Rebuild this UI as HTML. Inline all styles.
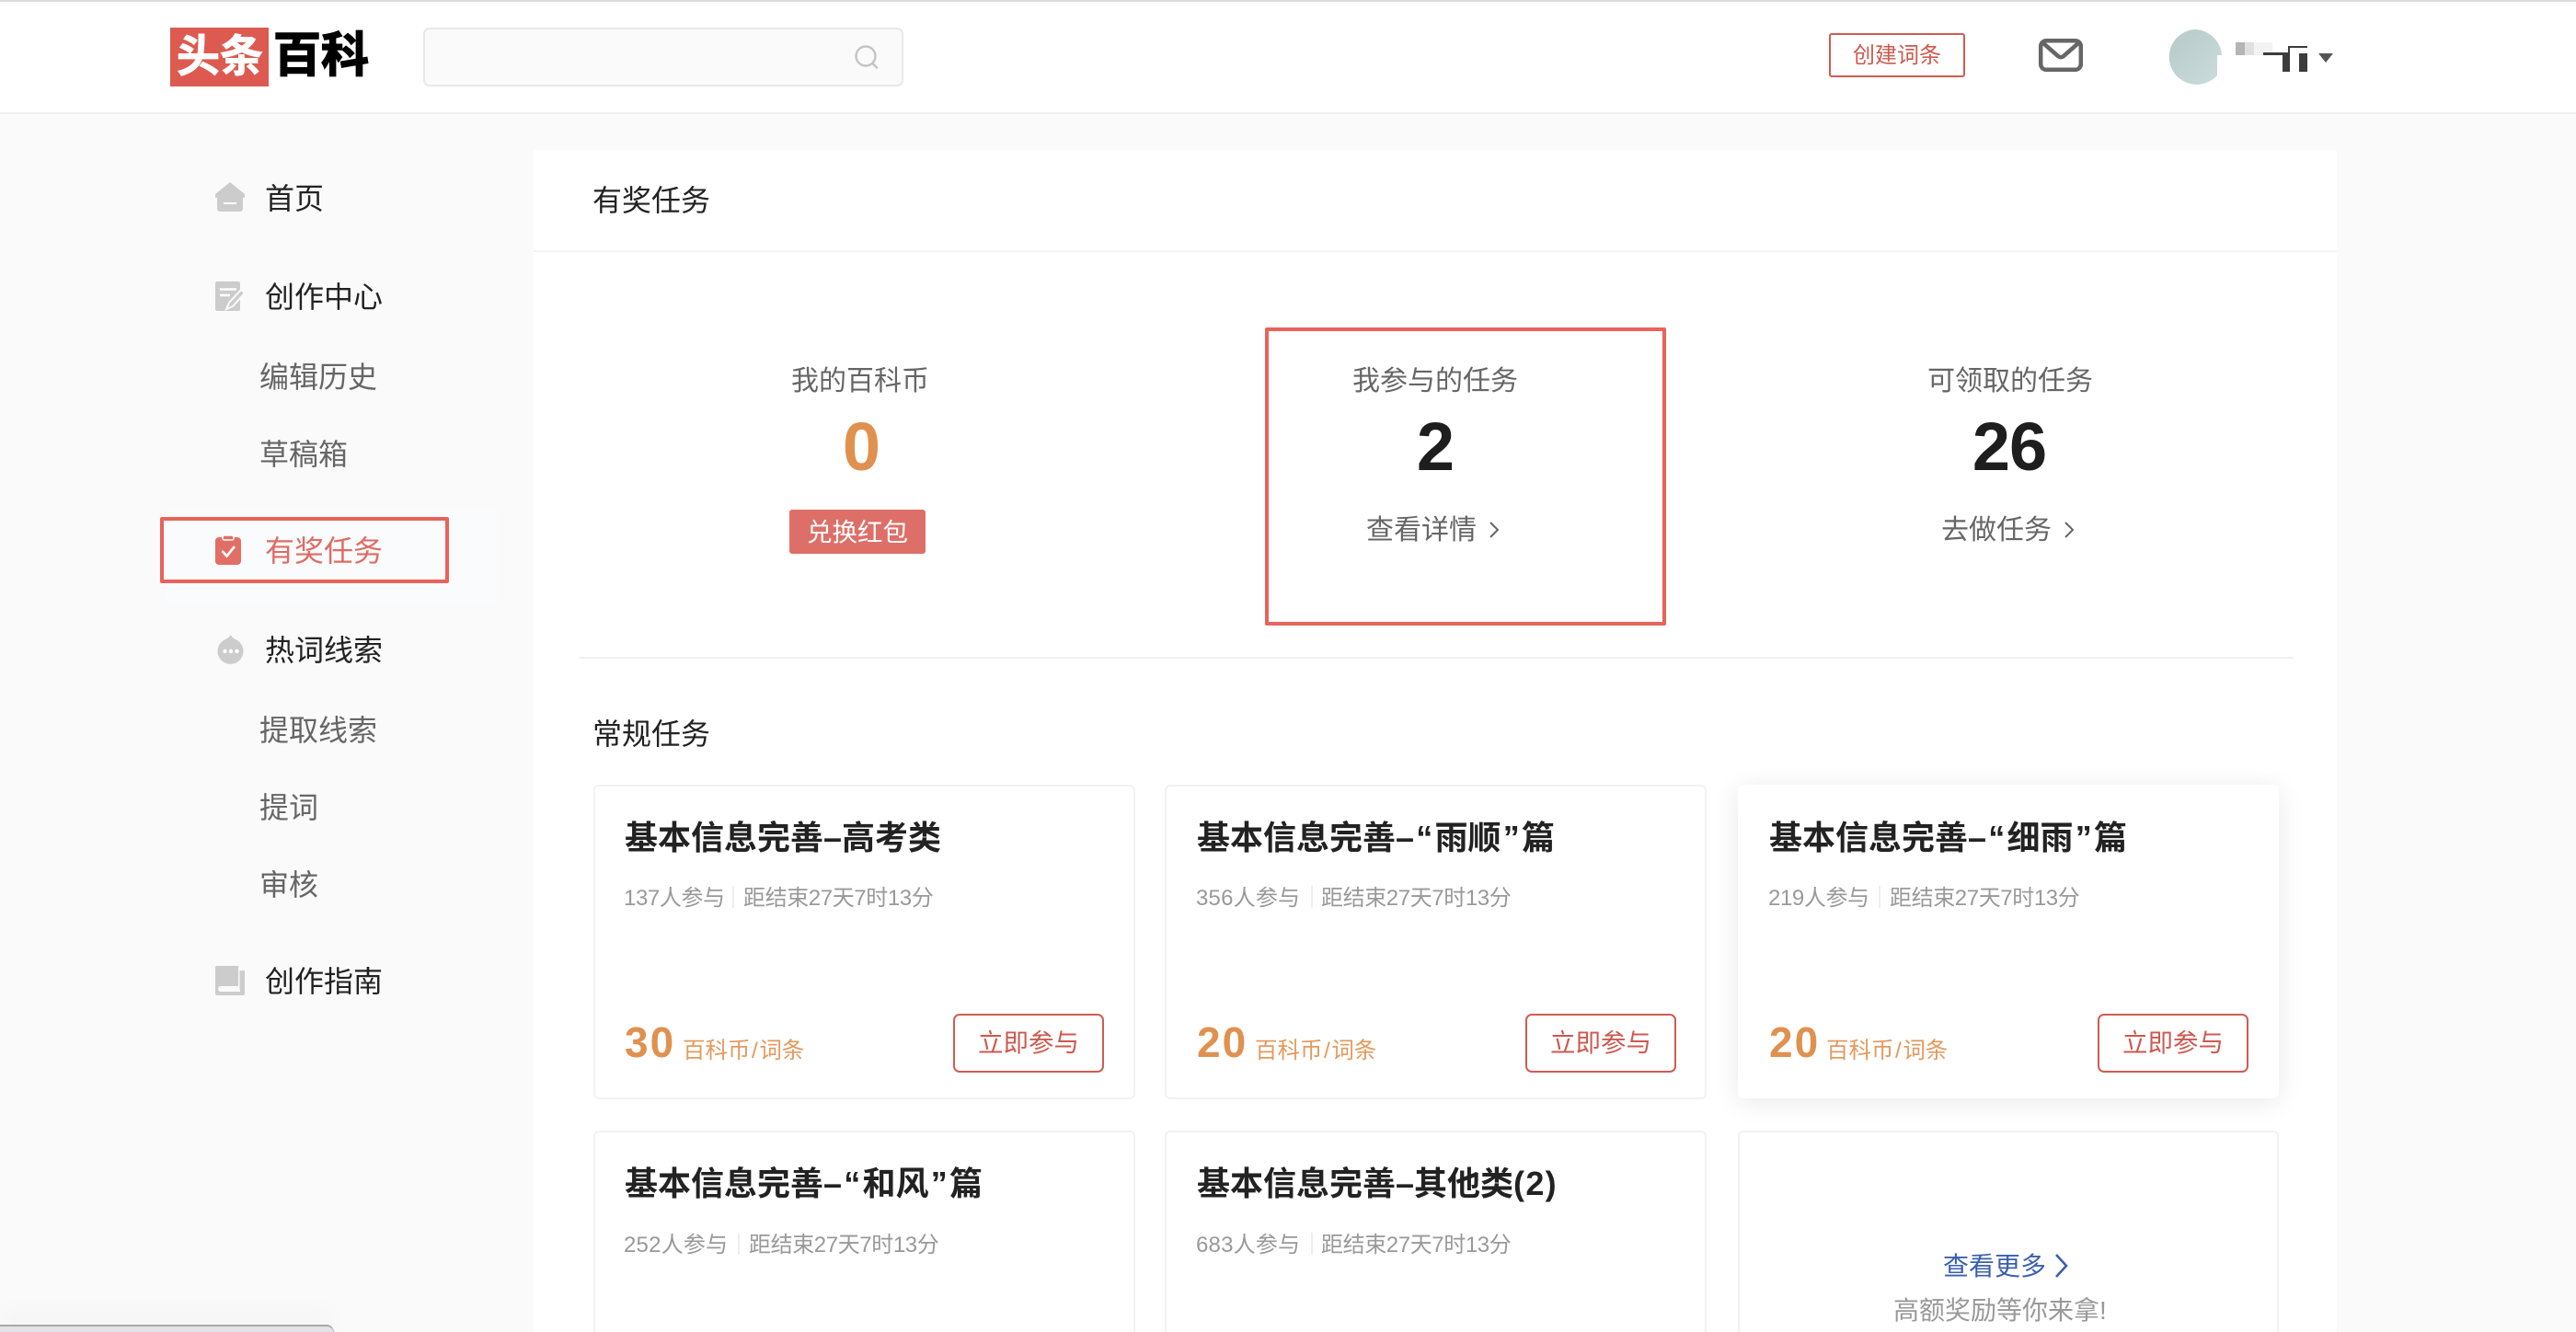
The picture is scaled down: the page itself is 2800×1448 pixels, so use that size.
<!DOCTYPE html>
<html lang="zh-CN"><head><meta charset="utf-8"><title>有奖任务</title>
<style>
html,body{margin:0;padding:0;width:2800px;height:1448px;overflow:hidden}
body{background:#fafafa;font-family:"Liberation Sans","Noto Sans CJK SC",sans-serif;color:#222}
#p{position:relative;width:2800px;height:1448px;overflow:hidden;background:#fafafa}
.a{position:absolute;box-sizing:border-box}
.t{position:absolute;white-space:nowrap;line-height:40px;margin-top:-18px}
.c{transform:translateX(-50%)}
.n{font-size:32px;color:#222;left:288px;margin-top:-19.5px}
.s{font-size:32px;color:#666;left:282px}
.st{font-size:30px;color:#666}
.num{font-size:74px;font-weight:bold;line-height:80px;margin-top:-40px;letter-spacing:-1px}
.card{position:absolute;box-sizing:border-box;background:#fff;border:2px solid #f2f2f2;border-radius:6px;width:589px}
.open{height:219px;border-bottom:0;border-radius:6px 6px 0 0}
.ti{font-size:36px;font-weight:bold;color:#222}
.q{margin:0 2.25px}
.m{font-size:24px;color:#999;letter-spacing:-.4px}
.m0{letter-spacing:.2px}
.sep{position:absolute;width:2px;height:24px;background:#eee}
.r{font-size:46px;font-weight:bold;color:#e0914f;letter-spacing:2px;margin-top:-20px}
.u{font-size:24.5px;color:#e39a5e}
.sl{margin:0 1.5px}
.b{position:absolute;box-sizing:border-box;width:164px;height:64px;border:2px solid #cf5c52;border-radius:7px;color:#cc5a50;font-size:27.5px;line-height:60px;text-align:center;background:#fff}
svg{position:absolute;overflow:visible}
</style></head><body><div id="p">

<!-- header -->
<div class="a" style="left:0;top:0;width:2800px;height:124px;background:#fff;border-top:2px solid #ddd;border-bottom:2px solid #eee"></div>
<div class="a" style="left:185px;top:30px;width:107px;height:64px;background:#dd5a50"></div>
<div class="t" style="left:192px;top:59px;font-size:47px;font-weight:bold;color:#fff;-webkit-text-stroke:1px #fff;transform:scaleY(1.02)">头条</div>
<div class="t" style="left:297px;top:61px;font-size:52px;font-weight:bold;color:#000;-webkit-text-stroke:1.5px #000;line-height:60px;margin-top:-30px">百科</div>
<div class="a" style="left:460px;top:30px;width:522px;height:64px;background:#fafafa;border:2px solid #e8e8e8;border-radius:7px"></div>
<svg style="left:928px;top:48px" width="28" height="28" viewBox="0 0 28 28" fill="none" stroke="#c4c4c4" stroke-width="2.4"><circle cx="13" cy="13" r="10.5"/><path d="M20.5 21l4.5 4.5" stroke-linecap="round"/></svg>

<div class="a" style="left:1988px;top:36px;width:148px;height:48px;border:2px solid #cf5c52;border-radius:3px"></div>
<div class="t c" style="left:2062px;top:59px;font-size:24px;color:#cc5a50">创建词条</div>
<svg style="left:2216px;top:42px" width="48" height="36" viewBox="0 0 48 36" fill="none" stroke="#666" stroke-width="4.5"><rect x="2.2" y="2.2" width="43.600" height="31.600" rx="6"/><path d="M5 5l16 14q3 2.400 6 0L43 5" stroke-linejoin="round"/></svg>

<svg style="left:2355px;top:32px" width="60" height="60" viewBox="0 0 60 60"><defs><linearGradient id="g" x1="0" y1="0" x2="1" y2="1"><stop offset="0" stop-color="#b6cac8"/><stop offset="1" stop-color="#cbdcdc"/></linearGradient></defs><path d="M30 0a30 30 0 0 1 30 28H55V50A30 30 0 1 1 30 0z" fill="url(#g)"/></svg>
<div class="a" style="left:2430px;top:46px;width:10px;height:14px;background:#b5b5b5"></div>
<div class="a" style="left:2440px;top:46px;width:10px;height:14px;background:#e0e0e0"></div>
<div class="a" style="left:2450px;top:46px;width:20px;height:14px;background:#f3f3f3"></div>
<div class="a" style="left:2460px;top:57px;width:29px;height:3px;background:#3c3c3c"></div>
<div class="a" style="left:2481px;top:58px;width:8px;height:20px;background:#3c3c3c"></div>
<div class="a" style="left:2499px;top:58px;width:9px;height:20px;background:#3c3c3c"></div>
<div class="a" style="left:2487px;top:50px;width:21px;height:2px;background:#3c3c3c"></div>
<div class="a" style="left:2487px;top:50px;width:2px;height:9px;background:#3c3c3c"></div>
<svg style="left:2520px;top:58px" width="16" height="10" viewBox="0 0 16 10"><path d="M0 0h16L8 10z" fill="#555"/></svg>

<!-- sidebar -->
<svg style="left:234px;top:198px" width="32" height="32" viewBox="0 0 32 32"><path d="M16 0L32 13v4h-2v12a3 3 0 0 1-3 3H5a3 3 0 0 1-3-3V17H0v-4z" fill="#ccc"/><rect x="9" y="22" width="14" height="2" fill="#fff"/></svg>
<div class="t n" style="top:215px">首页</div>

<svg style="left:234px;top:306px" width="32" height="32" viewBox="0 0 32 32"><rect width="27" height="32" rx="2" fill="#ccc"/><path d="M5 8.500h18M5 15h11" stroke="#fff" stroke-width="2.400"/><path d="M12 30l3-7L28 9l4 3.500L19 27z" fill="#ccc" stroke="#fafafa" stroke-width="2"/></svg>
<div class="t n" style="top:322px">创作中心</div>
<div class="t s" style="top:408px">编辑历史</div>
<div class="t s" style="top:492px">草稿箱</div>

<div class="a" style="left:180px;top:553px;width:360px;height:104px;background:#fafbfc"></div>
<div class="a" style="left:174px;top:562px;width:314px;height:72px;border:4px solid #e8635a;border-radius:2px"></div>
<svg style="left:234px;top:582px" width="28" height="32" viewBox="0 0 28 32"><rect y="2" width="28" height="30" rx="4" fill="#e26f66"/><rect x="8" y="0" width="12" height="5" rx="2" fill="#e26f66" stroke="#fafbfc" stroke-width="1.500"/><path d="M7.500 17l5 5.500L21 12" fill="none" stroke="#fff" stroke-width="2.600"/></svg>
<div class="t n" style="top:598px;color:#de6b63">有奖任务</div>

<svg style="left:237px;top:690px" width="28" height="32" viewBox="0 0 28 32"><path d="M14 0c1 3 3 4 5 5a14 14 0 1 1-11 0c2-1 4-2 6-5z" fill="#ccc"/><circle cx="7.500" cy="18" r="2.200" fill="#fff"/><circle cx="14" cy="18" r="2.200" fill="#fff"/><circle cx="20.500" cy="18" r="2.200" fill="#fff"/></svg>
<div class="t n" style="top:706px">热词线索</div>
<div class="t s" style="top:792px">提取线索</div>
<div class="t s" style="top:876px">提词</div>
<div class="t s" style="top:960px">审核</div>

<svg style="left:234px;top:1050px" width="32" height="32" viewBox="0 0 32 32"><path d="M2 0h23v22H6a3 3 0 0 0 0 6h21V6h2v-1h3v25a2 2 0 0 1-2 2H2a2 2 0 0 1-2-2V2a2 2 0 0 1 2-2z" fill="#ccc"/><path d="M27.500 5v21" stroke="#ccc" stroke-width="2"/></svg>
<div class="t n" style="top:1066px">创作指南</div>

<!-- main card -->
<div class="a" style="left:580px;top:163px;width:1960px;height:1285px;background:#fff"></div>
<div class="a" style="left:580px;top:272px;width:1960px;height:2px;background:#f3f3f3"></div>
<div class="t" style="left:644px;top:216px;font-size:32px">有奖任务</div>

<div class="t st c" style="left:935px;top:413px">我的百科币</div>
<div class="t num c" style="left:936px;top:486px;color:#e0914f">0</div>
<div class="a" style="left:858px;top:554px;width:148px;height:48px;background:#de6f68;border-radius:3px"></div>
<div class="t c" style="left:932px;top:577px;font-size:27.500px;color:#fff">兑换红包</div>

<div class="a" style="left:1375px;top:356px;width:436px;height:324px;border:4px solid #e8635a;border-radius:2px"></div>
<div class="t st c" style="left:1560px;top:413px">我参与的任务</div>
<div class="t num c" style="left:1560px;top:486px;color:#1e1e1e">2</div>
<div class="t st" style="left:1485px;top:575px">查看详情</div>
<svg style="left:1618px;top:566px" width="12" height="20" viewBox="0 0 12 20" fill="none" stroke="#666" stroke-width="2"><path d="M2 2l8 8-8 8"/></svg>

<div class="t st c" style="left:2185px;top:413px">可领取的任务</div>
<div class="t num c" style="left:2184px;top:486px;color:#1e1e1e">26</div>
<div class="t st" style="left:2110px;top:575px">去做任务</div>
<svg style="left:2243px;top:566px" width="12" height="20" viewBox="0 0 12 20" fill="none" stroke="#666" stroke-width="2"><path d="M2 2l8 8-8 8"/></svg>

<div class="a" style="left:629px;top:714px;width:1864px;height:2px;background:#f0f0f0"></div>
<div class="t" style="left:644px;top:796px;font-size:32px">常规任务</div>

<!-- cards row 1 -->
<div class="card" style="left:645px;top:853px;height:342px"></div>
<div class="t ti" style="left:679px;top:909px">基本信息完善–高考类</div>
<div class="t m" style="left:678px;top:975px">137人参与</div><div class="sep" style="left:796px;top:963px"></div><div class="t m" style="left:808px;top:975px">距结束27天7时13分</div>
<div class="t r" style="left:679px;top:1133px">30</div><div class="t u" style="left:742px;top:1141px">百科币<span class="sl">/</span>词条</div>
<div class="b" style="left:1036px;top:1102px">立即参与</div>

<div class="card" style="left:1266px;top:853px;height:342px"></div>
<div class="t ti" style="left:1301px;top:909px">基本信息完善–<span class="q">“</span>雨顺<span class="q">”</span>篇</div>
<div class="t m m0" style="left:1300px;top:975px">356人参与</div><div class="sep" style="left:1425px;top:963px"></div><div class="t m" style="left:1436px;top:975px">距结束27天7时13分</div>
<div class="t r" style="left:1301px;top:1133px">20</div><div class="t u" style="left:1364px;top:1141px">百科币<span class="sl">/</span>词条</div>
<div class="b" style="left:1658px;top:1102px">立即参与</div>

<div class="card" style="left:1889px;top:853px;height:341px;width:588px;border-color:#fff;box-shadow:0 4px 28px rgba(0,0,0,.09)"></div>
<div class="t ti" style="left:1923px;top:909px">基本信息完善–<span class="q">“</span>细雨<span class="q">”</span>篇</div>
<div class="t m" style="left:1922px;top:975px">219人参与</div><div class="sep" style="left:2042px;top:963px"></div><div class="t m" style="left:2054px;top:975px">距结束27天7时13分</div>
<div class="t r" style="left:1923px;top:1133px">20</div><div class="t u" style="left:1985px;top:1141px">百科币<span class="sl">/</span>词条</div>
<div class="b" style="left:2280px;top:1102px">立即参与</div>

<!-- cards row 2 -->
<div class="card open" style="left:645px;top:1229px"></div>
<div class="t ti" style="left:679px;top:1285px">基本信息完善–<span class="q">“</span>和风<span class="q">”</span>篇</div>
<div class="t m m0" style="left:678px;top:1352px">252人参与</div><div class="sep" style="left:802px;top:1340px"></div><div class="t m" style="left:814px;top:1352px">距结束27天7时13分</div>

<div class="card open" style="left:1266px;top:1229px"></div>
<div class="t ti" style="left:1301px;top:1285px">基本信息完善–其他类<span style="letter-spacing:1.300px">(2)</span></div>
<div class="t m m0" style="left:1300px;top:1352px">683人参与</div><div class="sep" style="left:1425px;top:1340px"></div><div class="t m" style="left:1436px;top:1352px">距结束27天7时13分</div>

<div class="card open" style="left:1889px;top:1229px;width:588px"></div>
<div class="t" style="left:2112px;top:1375px;font-size:28px;color:#3b5fae">查看更多</div>
<svg style="left:2233px;top:1362px" width="16" height="28" viewBox="0 0 16 28" fill="none" stroke="#3b5fae" stroke-width="2.600"><path d="M2 2l11 12L2 26"/></svg>
<div class="t" style="left:2058px;top:1423px;font-size:28px;color:#999">高额奖励等你来拿!</div>

<!-- bottom window -->
<div class="a" style="left:0;top:1440px;width:363px;height:8px;background:#e2e2e8;border-top:2px solid #aaa;border-right:1px solid #bbb;border-radius:0 8px 0 0;box-shadow:0 -8px 30px rgba(0,0,0,.07)"></div>
</div></body></html>
